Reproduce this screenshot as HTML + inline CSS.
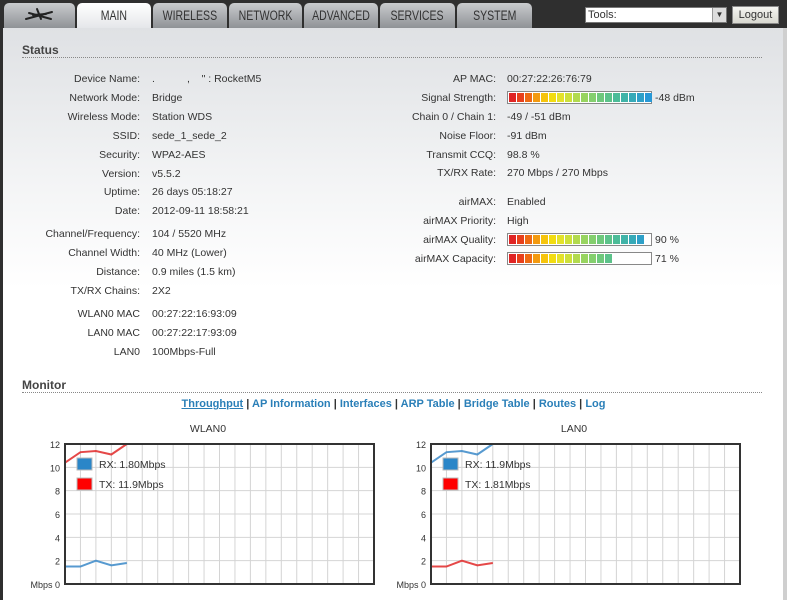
<!DOCTYPE html>
<html><head><meta charset="utf-8"><style>
*{margin:0;padding:0;box-sizing:border-box}
body{width:787px;height:600px;overflow:hidden;background:#2f2f2f;font-family:"Liberation Sans",Arial,sans-serif;font-size:10.5px;color:#333;position:relative}
.tab{position:absolute;top:3px;height:25px;border-radius:5px 5px 0 0;background:linear-gradient(#c9cbce,#8f9296);color:#333;text-align:center;line-height:25px}
.tab span{display:inline-block;font-size:13.5px;transform:scaleX(.78)}
.tab.act{background:linear-gradient(#fff,#e4e6e9);height:26px}
#content{position:absolute;left:3px;top:28px;width:780px;height:572px;background:linear-gradient(#dfe1e4 0,#f4f5f6 160px,#fff 260px,#fff)}
#rb{position:absolute;left:783px;top:28px;width:4px;height:572px;background:#cfcfcf}
h2{position:absolute;font-size:12px;font-weight:bold;color:#444}
.rule{position:absolute;height:0;border-top:1px dotted #888}
.l{position:absolute;text-align:right;width:200px}
.v{position:absolute}
.bar{position:absolute;height:13px;border:1px solid #888;background:#fff;width:145px}
.bar span{position:absolute;top:1px;height:9px;width:7px}
.links{position:absolute;top:398px;left:0;width:787px;text-align:center;font-weight:bold;font-size:11px;color:#333}
.links a{color:#2a7fb8;text-decoration:none}
</style></head><body>
<div class="tab" style="left:4px;width:71px"><svg width="71" height="25"><g stroke="#222" stroke-width="2" stroke-linecap="round"><line x1="22" y1="16" x2="48" y2="9"/><line x1="25" y1="10" x2="47" y2="16"/><line x1="33" y1="6" x2="37" y2="16"/><line x1="29" y1="12" x2="42" y2="11"/></g></svg></div>
<div class="tab act" style="left:77px;width:74px"><span>MAIN</span></div>
<div class="tab" style="left:153px;width:74px"><span>WIRELESS</span></div>
<div class="tab" style="left:229px;width:73px"><span>NETWORK</span></div>
<div class="tab" style="left:304px;width:74px"><span>ADVANCED</span></div>
<div class="tab" style="left:380px;width:75px"><span>SERVICES</span></div>
<div class="tab" style="left:457px;width:75px"><span>SYSTEM</span></div>
<div style="position:absolute;left:585px;top:7px;width:142px;height:16px;background:#fff;border:1px solid #777;font-size:11px;line-height:14px;padding-left:2px">Tools:<div style="position:absolute;right:0;top:0;width:14px;height:14px;background:#ddd;border-left:1px solid #999;text-align:center;font-size:8px;line-height:14px">▼</div></div>
<div style="position:absolute;left:732px;top:6px;width:47px;height:18px;background:linear-gradient(#f4f4f0,#d8d8d0);border:1px solid #888;text-align:center;line-height:16px;font-size:11px">Logout</div>
<div id="content"></div><div id="rb"></div>
<h2 style="left:22px;top:43px">Status</h2><div class="rule" style="left:22px;top:57px;width:740px"></div>
<div class="l" style="left:-60px;top:73px">Device Name:</div><div class="v" style="left:152px;top:73px">. &nbsp; &nbsp; &nbsp; &nbsp; &nbsp; , &nbsp; &nbsp;" : RocketM5</div>
<div class="l" style="left:-60px;top:92px">Network Mode:</div><div class="v" style="left:152px;top:92px">Bridge</div>
<div class="l" style="left:-60px;top:111px">Wireless Mode:</div><div class="v" style="left:152px;top:111px">Station WDS</div>
<div class="l" style="left:-60px;top:130px">SSID:</div><div class="v" style="left:152px;top:130px">sede_1_sede_2</div>
<div class="l" style="left:-60px;top:149px">Security:</div><div class="v" style="left:152px;top:149px">WPA2-AES</div>
<div class="l" style="left:-60px;top:168px">Version:</div><div class="v" style="left:152px;top:168px">v5.5.2</div>
<div class="l" style="left:-60px;top:186px">Uptime:</div><div class="v" style="left:152px;top:186px">26 days 05:18:27</div>
<div class="l" style="left:-60px;top:205px">Date:</div><div class="v" style="left:152px;top:205px">2012-09-11 18:58:21</div>
<div class="l" style="left:-60px;top:228px">Channel/Frequency:</div><div class="v" style="left:152px;top:228px">104 / 5520 MHz</div>
<div class="l" style="left:-60px;top:247px">Channel Width:</div><div class="v" style="left:152px;top:247px">40 MHz (Lower)</div>
<div class="l" style="left:-60px;top:266px">Distance:</div><div class="v" style="left:152px;top:266px">0.9 miles (1.5 km)</div>
<div class="l" style="left:-60px;top:285px">TX/RX Chains:</div><div class="v" style="left:152px;top:285px">2X2</div>
<div class="l" style="left:-60px;top:308px">WLAN0 MAC</div><div class="v" style="left:152px;top:308px">00:27:22:16:93:09</div>
<div class="l" style="left:-60px;top:327px">LAN0 MAC</div><div class="v" style="left:152px;top:327px">00:27:22:17:93:09</div>
<div class="l" style="left:-60px;top:346px">LAN0</div><div class="v" style="left:152px;top:346px">100Mbps-Full</div>

<div class="l" style="left:296px;top:73px">AP MAC:</div><div class="v" style="left:507px;top:73px">00:27:22:26:76:79</div>
<div class="l" style="left:296px;top:92px">Signal Strength:</div><div class="bar" style="left:507px;top:91px" id="b1"></div><div class="v" style="left:655px;top:92px">-48 dBm</div>
<div class="l" style="left:296px;top:111px">Chain 0 / Chain 1:</div><div class="v" style="left:507px;top:111px">-49 / -51 dBm</div>
<div class="l" style="left:296px;top:130px">Noise Floor:</div><div class="v" style="left:507px;top:130px">-91 dBm</div>
<div class="l" style="left:296px;top:149px">Transmit CCQ:</div><div class="v" style="left:507px;top:149px">98.8 %</div>
<div class="l" style="left:296px;top:167px">TX/RX Rate:</div><div class="v" style="left:507px;top:167px">270 Mbps / 270 Mbps</div>
<div class="l" style="left:296px;top:196px">airMAX:</div><div class="v" style="left:507px;top:196px">Enabled</div>
<div class="l" style="left:296px;top:215px">airMAX Priority:</div><div class="v" style="left:507px;top:215px">High</div>
<div class="l" style="left:296px;top:234px">airMAX Quality:</div><div class="bar" style="left:507px;top:233px" id="b2"></div><div class="v" style="left:655px;top:234px">90 %</div>
<div class="l" style="left:296px;top:253px">airMAX Capacity:</div><div class="bar" style="left:507px;top:252px" id="b3"></div><div class="v" style="left:655px;top:253px">71 %</div>

<h2 style="left:22px;top:378px">Monitor</h2><div class="rule" style="left:22px;top:392px;width:740px"></div>
<div class="links"><a style="text-decoration:underline">Throughput</a> | <a>AP Information</a> | <a>Interfaces</a> | <a>ARP Table</a> | <a>Bridge Table</a> | <a>Routes</a> | <a>Log</a></div>

<svg style="position:absolute;left:0;top:415px" width="787" height="185" font-family="Liberation Sans,Arial,sans-serif" font-size="9" fill="#333">
<text x="208" y="17" text-anchor="middle" font-size="10.5">WLAN0</text>
<text x="574" y="17" text-anchor="middle" font-size="10.5">LAN0</text>
<g id="g1"></g>
</svg>
<script>
function bar(id,n){var b=document.getElementById(id),c=['#e02424','#e8401c','#ee6a14','#f39a10','#f6c40c','#f2dc10','#e4e22a','#cde03a','#b2da4e','#98d460','#84cf6e','#6ec87c','#5cc28a','#4cbc98','#40b4a8','#36aab8','#2ea0c8','#2898d6'];for(var i=0;i<n;i++){var s=document.createElement('span');s.style.left=(1+i*8)+'px';s.style.background=c[i];b.appendChild(s);}}
bar('b1',18);bar('b2',17);bar('b3',13);
var g=document.getElementById('g1'),h='';
function chart(x0,rx,tx,rxl,txl){var w=309,y0=29,hh=140;
for(var i=1;i<20;i++){var x=x0+i*w/20;h+='<line x1="'+x+'" y1="'+y0+'" x2="'+x+'" y2="'+(y0+hh)+'" stroke="#d4d4d4"/>';}
for(var j=1;j<6;j++){var y=y0+j*hh/6;h+='<line x1="'+x0+'" y1="'+y+'" x2="'+(x0+w)+'" y2="'+y+'" stroke="#d4d4d4"/>';}
var labs=['12','10','8','6','4','2','Mbps 0'];for(var k=0;k<7;k++)h+='<text x="'+(x0-5)+'" y="'+(y0+k*hh/6+4)+'" text-anchor="end">'+labs[k]+'</text>';
function pl(vals,col){var p=[];for(var i=0;i<vals.length;i++)p.push((x0+i*w/20)+','+(y0+hh-vals[i]*hh/12));return '<polyline points="'+p.join(' ')+'" fill="none" stroke="'+col+'" stroke-width="2" opacity=".85"/>';}
h+=pl(rx,'#3a88c8')+pl(tx,'#e02828');
h+='<rect x="'+x0+'" y="'+y0+'" width="'+w+'" height="'+hh+'" fill="none" stroke="#333" stroke-width="2"/>';
h+='<rect x="'+(x0+12)+'" y="'+(y0+14)+'" width="15" height="12" fill="#2a86c8" stroke="#bbb"/><text x="'+(x0+34)+'" y="'+(y0+24)+'" font-size="10.5">'+rxl+'</text>';
h+='<rect x="'+(x0+12)+'" y="'+(y0+34)+'" width="15" height="12" fill="#f00" stroke="#bbb"/><text x="'+(x0+34)+'" y="'+(y0+44)+'" font-size="10.5">'+txl+'</text>';}
chart(65,[1.5,1.5,2,1.6,1.8],[10.4,11.3,11.4,11.1,12],'RX: 1.80Mbps','TX: 11.9Mbps');
chart(431,[10.4,11.3,11.4,11.1,12],[1.5,1.5,2,1.6,1.8],'RX: 11.9Mbps','TX: 1.81Mbps');
g.innerHTML=h;
</script>
</body></html>
